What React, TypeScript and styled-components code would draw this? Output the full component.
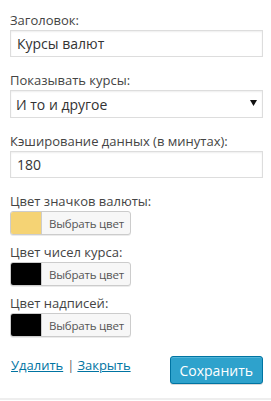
import React from "react";
import styled, { createGlobalStyle } from "styled-components";

const GlobalStyle = createGlobalStyle`
  html, body {
    margin: 0;
    padding: 0;
    background: #fff;
  }
  body {
    font-family: "Open Sans", "Liberation Sans", sans-serif;
    color: #444;
  }
`;

const Form = styled.form`
  width: 271px;
  box-sizing: border-box;
  padding: 11px 8px 0 10px;
`;

const Field = styled.div<{ $gap?: number }>`
  display: flex;
  flex-direction: column;
  margin-bottom: ${(p) => (p.$gap ?? 14)}px;
`;

const Label = styled.label`
  display: block;
  font-size: 13px;
  line-height: 19px;
  color: #444;
`;

const TextInput = styled.input`
  box-sizing: border-box;
  width: 100%;
  height: 27px;
  margin: 0;
  padding: 0 6px;
  border: 1px solid #ddd;
  box-shadow: inset 0 1px 2px rgba(0, 0, 0, 0.07);
  background: #fff;
  font-family: "Open Sans", "Liberation Sans", sans-serif;
  font-size: 14px;
  color: #333;
  outline: none;
`;

const SelectWrap = styled.div`
  position: relative;
  width: 100%;
`;

const Select = styled.select`
  box-sizing: border-box;
  width: 100%;
  height: 28px;
  margin: 0;
  padding: 0 20px 0 5px;
  border: 1px solid #ddd;
  box-shadow: inset 0 1px 2px rgba(0, 0, 0, 0.07);
  background: #fff;
  appearance: none;
  -webkit-appearance: none;
  border-radius: 0;
  font-family: "Open Sans", "Liberation Sans", sans-serif;
  font-size: 14px;
  color: #333;
  outline: none;
`;

const Arrow = styled.svg`
  position: absolute;
  right: 6px;
  top: 10px;
  pointer-events: none;
`;

const ColorButton = styled.button`
  display: inline-flex;
  align-self: flex-start;
  align-items: stretch;
  height: 24px;
  padding: 0;
  margin: 0;
  border: 1px solid #ccc;
  border-radius: 3px;
  overflow: hidden;
  background: #f7f7f7;
  box-shadow: 0 1px 0 rgba(0, 0, 0, 0.08);
  cursor: pointer;
`;

const Swatch = styled.span<{ $color: string }>`
  width: 30px;
  background: ${(p) => p.$color};
`;

const ColorText = styled.span`
  display: flex;
  align-items: center;
  padding: 0 6px 0 7px;
  border-left: 1px solid #ccc;
  font-family: "Open Sans", "Liberation Sans", sans-serif;
  font-size: 11.5px;
  letter-spacing: -0.2px;
  color: #555;
`;

const Footer = styled.div`
  display: flex;
  justify-content: space-between;
  align-items: flex-start;
  margin-top: 19px;
  padding-left: 1px;
  padding-bottom: 14px;
`;

const Links = styled.div`
  font-size: 13px;
  line-height: 19px;
  color: #666;
`;

const Link = styled.a`
  color: #0074a2;
  text-decoration: underline;
`;

const Sep = styled.span`
  margin: 0 3px 0 4px;
  color: #666;
`;

const SaveButton = styled.button`
  box-sizing: border-box;
  height: 28px;
  margin: 0;
  padding: 0 9px 0 8px;
  border: 1px solid #0074a2;
  border-radius: 3px;
  background: #2ea2cc;
  box-shadow: inset 0 1px 0 rgba(120, 200, 230, 0.5), 0 1px 0 rgba(0, 0, 0, 0.15);
  font-family: "Open Sans", "Liberation Sans", sans-serif;
  font-size: 14px;
  color: #fff;
  cursor: pointer;
`;

const Divider = styled.div`
  height: 2px;
  background: #eee;
`;

function ColorField({ label, color, gap }: { label: string; color: string; gap?: number }) {
  return (
    <Field $gap={gap}>
      <Label>{label}</Label>
      <ColorButton type="button">
        <Swatch $color={color} />
        <ColorText>Выбрать цвет</ColorText>
      </ColorButton>
    </Field>
  );
}

export default function App() {
  return (
    <>
      <GlobalStyle />
      <Form onSubmit={(e) => e.preventDefault()}>
        <Field>
          <Label>Заголовок:</Label>
          <TextInput defaultValue="Курсы валют" />
        </Field>
        <Field>
          <Label>Показывать курсы:</Label>
          <SelectWrap>
            <Select defaultValue="both">
              <option value="both">И то и другое</option>
            </Select>
            <Arrow width="7" height="6" viewBox="0 0 7 6">
              <path d="M0 0h7L3.5 6z" fill="#111" />
            </Arrow>
          </SelectWrap>
        </Field>
        <Field>
          <Label>Кэширование данных (в минутах):</Label>
          <TextInput defaultValue="180" />
        </Field>
        <ColorField label="Цвет значков валюты:" color="#f5d374" gap={8} />
        <ColorField label="Цвет чисел курса:" color="#000" gap={8} />
        <ColorField label="Цвет надписей:" color="#000" gap={0} />
        <Footer>
          <Links>
            <Link href="#">Удалить</Link>
            <Sep>|</Sep>
            <Link href="#">Закрыть</Link>
          </Links>
          <SaveButton type="submit">Сохранить</SaveButton>
        </Footer>
      </Form>
      <Divider />
    </>
  );
}
